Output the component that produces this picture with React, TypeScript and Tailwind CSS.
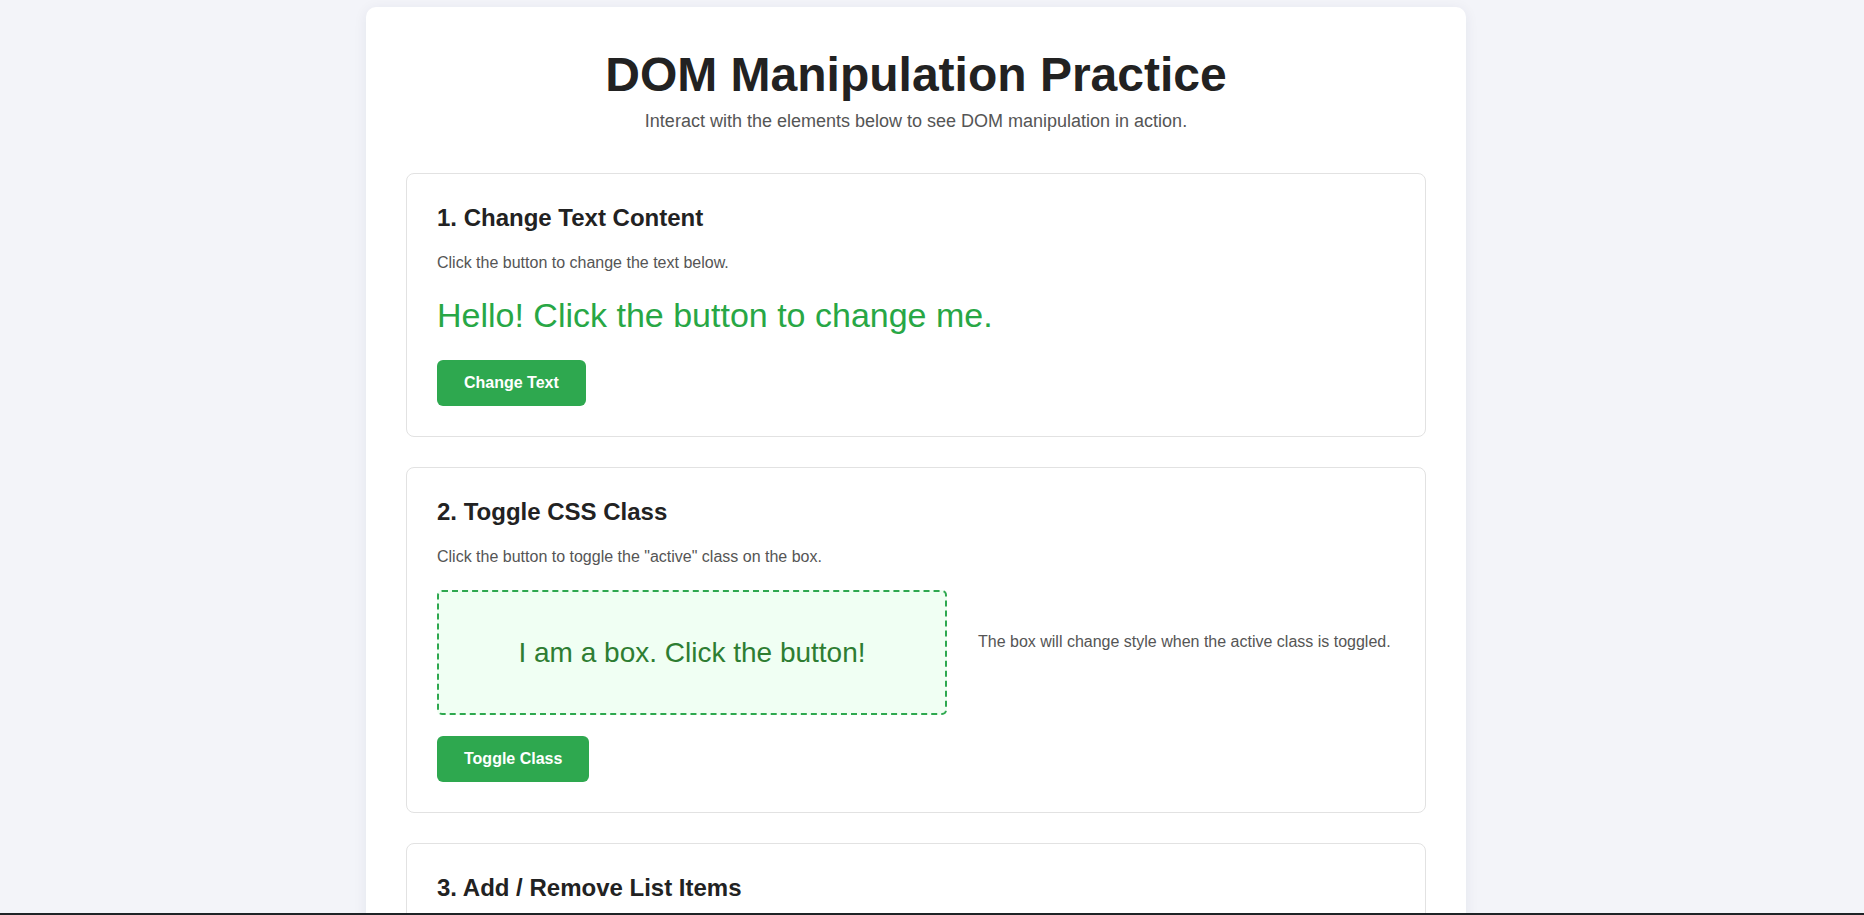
import React, { useState } from "react";

export default function App() {
  const [changed, setChanged] = useState(false);
  const [active, setActive] = useState(true);

  return (
    <div className="min-h-screen bg-[#f3f4f9] pt-[7px] pr-[32px] font-['Liberation_Sans',Arial,sans-serif] text-[#222]">
      <div className="mx-auto w-[1100px] rounded-[10px] bg-white px-[40px] pt-[40px] pb-[40px] shadow-[0_2px_14px_rgba(30,40,90,0.07)]">
        {/* --- HEADER --- */}
        <h1 className="text-center text-[48px] leading-[55px] font-bold text-[#222]">DOM Manipulation Practice</h1>
        <p className="mt-[9px] text-center text-[18px] leading-[21px] text-[#555]">
          Interact with the elements below to see DOM manipulation in action.
        </p>

        <div className="mt-[41px] flex flex-col gap-[30px]">
          {/* --- 1. TEXT --- */}
          <section className="rounded-[8px] border border-[#e2e2e2] p-[30px]">
            <h2 className="text-[24px] leading-[28px] font-bold text-[#222]">1. Change Text Content</h2>
            <p className="mt-[21px] text-[16px] leading-[20px] text-[#555]">Click the button to change the text below.</p>
            <p className="mt-[22px] text-[34px] leading-[40px] text-[#28a745]">
              {changed ? "The text has been changed!" : "Hello! Click the button to change me."}
            </p>
            <button
              onClick={() => setChanged(!changed)}
              className="mt-[25px] h-[46px] rounded-[6px] bg-[#2ea84f] px-[27px] text-[16px] font-bold text-white"
            >
              Change Text
            </button>
          </section>

          {/* --- 2. CLASS --- */}
          <section className="rounded-[8px] border border-[#e2e2e2] p-[30px]">
            <h2 className="text-[24px] leading-[28px] font-bold text-[#222]">2. Toggle CSS Class</h2>
            <p className="mt-[21px] text-[16px] leading-[20px] text-[#555]">
              Click the button to toggle the "active" class on the box.
            </p>
            <div className="mt-[23px] flex items-center gap-[31px]">
              <div
                className={`flex h-[125px] w-[510px] shrink-0 items-center justify-center rounded-[5px] border-2 border-dashed text-[28px] ${
                  active ? "border-[#2ea84f] bg-[#f0fff3] text-[#2e7d32]" : "border-[#bbb] bg-[#fafafa] text-[#555]"
                }`}
              >
                I am a box. Click the button!
              </div>
              <p className="mb-[21px] flex-1 text-[16px] leading-[20px] text-[#555]">
                The box will change style when the active class is toggled.
              </p>
            </div>
            <button
              onClick={() => setActive(!active)}
              className="mt-[21px] h-[46px] rounded-[6px] bg-[#2ea84f] px-[27px] text-[16px] font-bold text-white"
            >
              Toggle Class
            </button>
          </section>

          {/* --- 3. LIST --- */}
          <section className="rounded-[8px] border border-[#e2e2e2] p-[30px]">
            <h2 className="text-[24px] leading-[28px] font-bold text-[#222]">3. Add / Remove List Items</h2>
            <div className="h-[120px]" />
          </section>
        </div>
      </div>

      {/* bottom edge of the window */}
      <div className="fixed inset-x-0 bottom-0 h-[2px] bg-[#1f2326]" />
    </div>
  );
}
